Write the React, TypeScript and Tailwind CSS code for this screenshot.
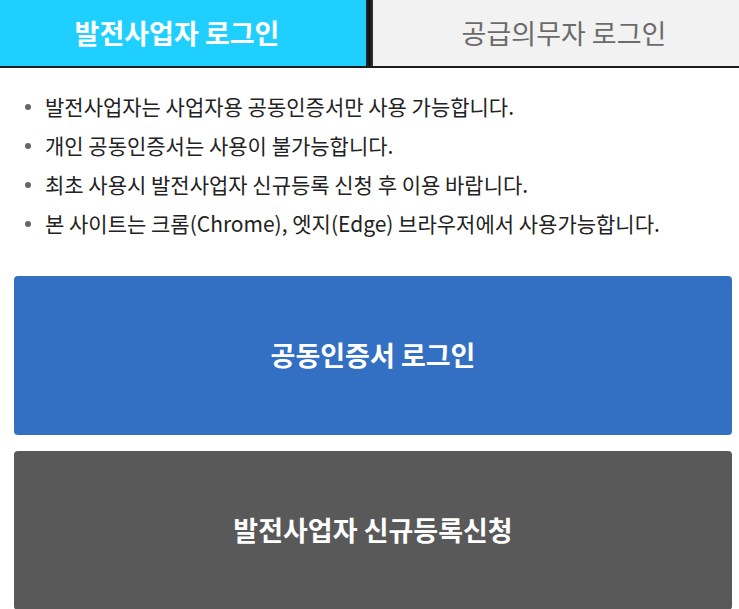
const notices = [
  "발전사업자는 사업자용 공동인증서만 사용 가능합니다.",
  "개인 공동인증서는 사용이 불가능합니다.",
  "최초 사용시 발전사업자 신규등록 신청 후 이용 바랍니다.",
  "본 사이트는 크롬(Chrome), 엣지(Edge) 브라우저에서 사용가능합니다.",
];

export default function App() {
  return (
    <div
      className="w-[739px] h-[609px] overflow-hidden bg-white"
      style={{ fontFamily: '"Noto Sans CJK KR", "Noto Sans", sans-serif' }}
    >
      {/* 탭 */}
      <div className="flex h-[68px] border-b-2 border-[#1c1c1c]">
        <button className="w-[366px] pr-[12px] bg-[#1fcfff] text-white text-[27px] font-bold">
          발전사업자 로그인
        </button>
        <div className="w-[7px] bg-gradient-to-r from-[#2a2a2a] via-[#101010] to-[#3a3a3a]" />
        <button className="flex-1 pl-[16px] bg-[#f2f2f2] text-[#6b6b6b] text-[27px] font-normal">
          공급의무자 로그인
        </button>
      </div>

      {/* 안내 */}
      <ul className="pt-[19px] pl-[25px] pr-3">
        {notices.map((n, i) => (
          <li
            key={i}
            className="flex items-center gap-[14px] h-[39px] text-[21px] text-[#222]"
          >
            <span className="w-[6px] h-[6px] rounded-full bg-[#666] shrink-0" />
            <span>{n}</span>
          </li>
        ))}
      </ul>

      {/* 버튼 */}
      <div className="mt-[33px] pl-[14px] pr-[7px] flex flex-col gap-[16px]">
        <button className="h-[159px] rounded-[4px] bg-[#3370c4] text-white text-[27px] font-bold">
          공동인증서 로그인
        </button>
        <button className="h-[159px] rounded-[4px] bg-[#595959] text-white text-[27px] font-bold">
          발전사업자 신규등록신청
        </button>
      </div>
    </div>
  );
}
